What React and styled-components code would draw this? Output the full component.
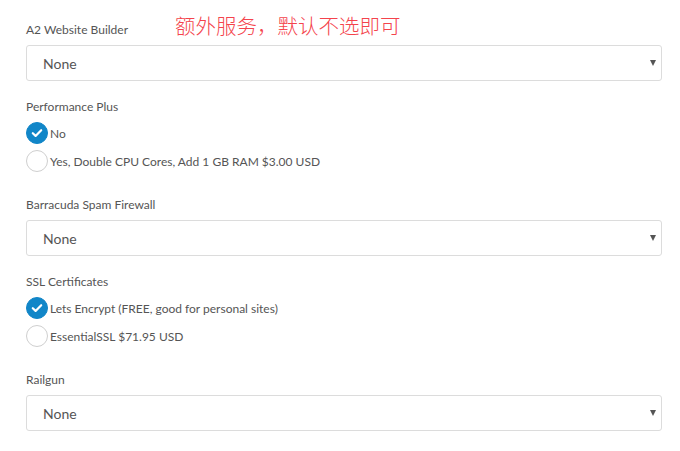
import React from 'react';
import styled, { createGlobalStyle } from 'styled-components';

const GlobalStyle = createGlobalStyle`
  html, body {
    margin: 0;
    padding: 0;
    background: #fff;
  }
  body {
    font-family: Lato, "Open Sans", "Noto Sans CJK SC", sans-serif;
    color: #555;
  }
`;

const fields = [
  { type: 'select', label: 'A2 Website Builder', value: 'None', note: '额外服务，默认不选即可' },
  {
    type: 'radio',
    label: 'Performance Plus',
    options: ['No', 'Yes, Double CPU Cores, Add 1 GB RAM $3.00 USD'],
    checked: 0,
  },
  { type: 'select', label: 'Barracuda Spam Firewall', value: 'None' },
  {
    type: 'radio',
    label: 'SSL Certificates',
    options: ['Lets Encrypt (FREE, good for personal sites)', 'EssentialSSL $71.95 USD'],
    checked: 0,
  },
  { type: 'select', label: 'Railgun', value: 'None' },
];

const App = () => {
  return (
    <>
      <GlobalStyle />
      <Page>
        {fields.map((f, i) => (
          <Field key={i} kind={f.type}>
            <Label>{f.label}</Label>
            {f.note && <Note>{f.note}</Note>}
            {f.type === 'select' ? (
              <SelectBox>
                <span>{f.value}</span>
                <Caret />
              </SelectBox>
            ) : (
              <RadioList>
                {f.options.map((opt, j) => (
                  <RadioRow key={j}>
                    <RadioDot checked={j === f.checked}>
                      {j === f.checked && (
                        <svg width="12" height="10" viewBox="0 0 12 10">
                          <path
                            d="M1.8 5.2 L4.6 7.9 L10.2 2.2"
                            fill="none"
                            stroke="#fff"
                            strokeWidth="2.2"
                            strokeLinecap="round"
                            strokeLinejoin="round"
                          />
                        </svg>
                      )}
                    </RadioDot>
                    <OptionText>{opt}</OptionText>
                  </RadioRow>
                ))}
              </RadioList>
            )}
          </Field>
        ))}
      </Page>
    </>
  );
};

const Page = styled.div`
  position: relative;
  width: 636px;
  padding: 20px 0 0 26px;
`;

const Field = styled.div`
  display: flex;
  flex-direction: column;
  margin-bottom: ${(p) => (p.kind === 'select' ? '16px' : '23px')};
`;

const Label = styled.div`
  font-size: 12px;
  line-height: 20px;
  color: #555;
  margin-bottom: 5px;
`;

const Note = styled.div`
  position: absolute;
  left: 175px;
  top: 12px;
  font-family: "Noto Sans CJK SC", sans-serif;
  font-size: 20.5px;
  font-weight: 300;
  line-height: 26px;
  color: #f4434c;
`;

const SelectBox = styled.div`
  box-sizing: border-box;
  height: 36px;
  border: 1px solid #dcdcdc;
  border-radius: 3px;
  display: flex;
  align-items: center;
  justify-content: space-between;
  padding: 0 5px 0 16px;
  font-size: 14px;
  color: #555;
`;

const Caret = styled.span`
  width: 0;
  height: 0;
  border-left: 3px solid transparent;
  border-right: 3px solid transparent;
  border-top: 6px solid #555;
  margin-top: -1px;
`;

const RadioList = styled.div`
  display: flex;
  flex-direction: column;
  gap: 6px;
`;

const RadioRow = styled.div`
  display: flex;
  align-items: center;
  height: 22px;
`;

const RadioDot = styled.span`
  box-sizing: border-box;
  width: 22px;
  height: 22px;
  border-radius: 50%;
  display: flex;
  align-items: center;
  justify-content: center;
  flex-shrink: 0;
  background: ${(p) => (p.checked ? '#1186c8' : '#fff')};
  border: 1px solid ${(p) => (p.checked ? '#1186c8' : '#cfcfcf')};
  margin-right: 2px;
`;

const OptionText = styled.span`
  font-size: 12px;
  color: #555;
`;

export default App;
